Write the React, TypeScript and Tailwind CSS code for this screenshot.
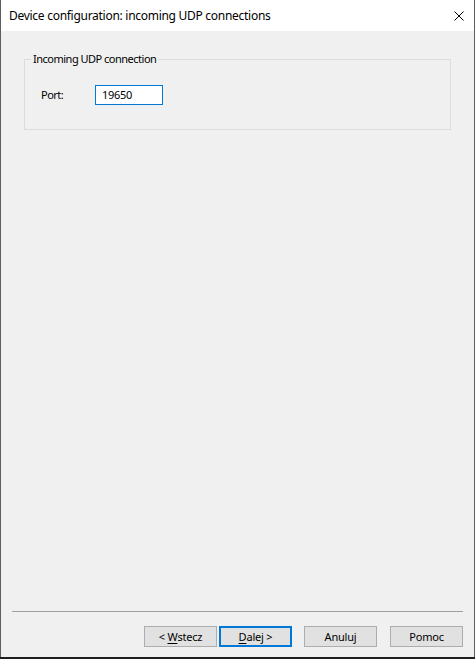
import React from "react";

export default function App() {
  const font = { fontFamily: '"Segoe UI", "Noto Sans", "Open Sans", sans-serif' };
  return (
    <div className="w-[475px] h-[659px] bg-[#1f1f1f] text-black" style={font}>
      <div className="w-[475px] h-[657px] flex flex-col border-x border-[#5e5e5e] bg-[#f0f0f0]">
        {/* Title bar */}
        <div className="h-[31px] shrink-0 bg-white flex items-center justify-between pl-[8px] pr-[10px]">
          <span className="text-[12px] leading-[16px] tracking-[-0.28px] text-black">
            Device configuration: incoming UDP connections
          </span>
          <svg width="10" height="10" viewBox="0 0 10 10" className="block">
            <path d="M0.5 0.5 L9.5 9.5 M9.5 0.5 L0.5 9.5" stroke="#000" strokeWidth="1" fill="none" />
          </svg>
        </div>

        {/* Content */}
        <div className="flex-1 flex flex-col text-[11px] tracking-[-0.5px]">
          <div className="pt-[20px] px-[23px]">
            <fieldset className="border border-[#dcdcdc] h-[79px] pl-[16px]">
              <legend className="ml-[-10px] px-[2px] leading-[16px]">Incoming UDP connection</legend>
              <div className="flex items-center mt-[18px]">
                <span className="w-[54px] leading-[16px]">Port:</span>
                <div className="w-[68px] h-[20px] border border-[#0078d7] bg-white flex items-center pl-[6px] leading-[16px] tracking-[-0.3px]">
                  19650
                </div>
              </div>
            </fieldset>
          </div>

          <div className="flex-1" />

          <div className="mx-[11px] h-px bg-[#a0a0a0]" />

          <div className="flex justify-end pr-[11px] mt-[14px] mb-[10px] tracking-[-0.2px]">
            <button className="w-[73px] h-[21px] bg-[#e1e1e1] border border-[#adadad] leading-[16px]">
              &lt; <span className="underline underline-offset-[2px]">W</span>stecz
            </button>
            <button className="ml-[2px] w-[73px] h-[21px] bg-[#e1e1e1] border-2 border-[#0078d7] leading-[16px]">
              <span className="underline underline-offset-[2px]">D</span>alej &gt;
            </button>
            <button className="ml-[12px] w-[73px] h-[21px] bg-[#e1e1e1] border border-[#adadad] leading-[16px]">
              Anuluj
            </button>
            <button className="ml-[13px] w-[73px] h-[21px] bg-[#e1e1e1] border border-[#adadad] leading-[16px]">
              Pomoc
            </button>
          </div>
        </div>
      </div>
    </div>
  );
}
